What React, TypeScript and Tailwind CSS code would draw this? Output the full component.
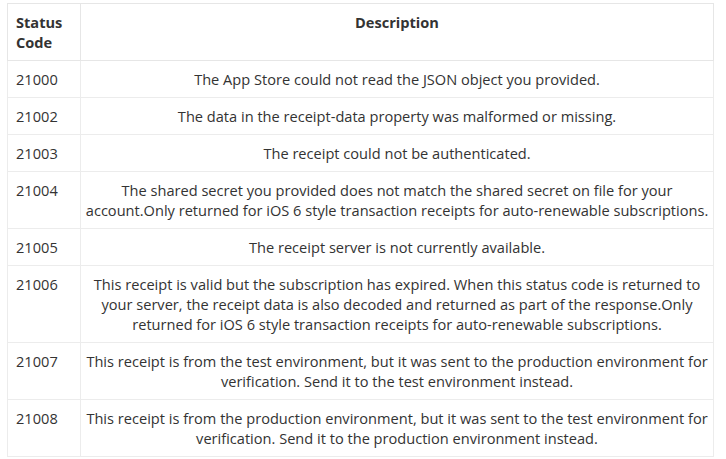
const rows: { code: string; lines: string[] }[] = [
  { code: '21000', lines: ['The App Store could not read the JSON object you provided.'] },
  { code: '21002', lines: ['The data in the receipt-data property was malformed or missing.'] },
  { code: '21003', lines: ['The receipt could not be authenticated.'] },
  {
    code: '21004',
    lines: [
      'The shared secret you provided does not match the shared secret on file for your',
      'account.Only returned for iOS 6 style transaction receipts for auto-renewable subscriptions.',
    ],
  },
  { code: '21005', lines: ['The receipt server is not currently available.'] },
  {
    code: '21006',
    lines: [
      'This receipt is valid but the subscription has expired. When this status code is returned to',
      'your server, the receipt data is also decoded and returned as part of the response.Only',
      'returned for iOS 6 style transaction receipts for auto-renewable subscriptions.',
    ],
  },
  {
    code: '21007',
    lines: [
      'This receipt is from the test environment, but it was sent to the production environment for',
      'verification. Send it to the test environment instead.',
    ],
  },
  {
    code: '21008',
    lines: [
      'This receipt is from the production environment, but it was sent to the test environment for',
      'verification. Send it to the production environment instead.',
    ],
  },
]

export default function App() {
  return (
    <div
      className="w-[726px] h-[459px] bg-white pt-[3px] pl-[7px] text-[#333] text-[14.6px] leading-[20px]"
      style={{ fontFamily: '"Open Sans", "Noto Sans", sans-serif' }}
    >
      <table className="w-[707px] border-collapse border border-[#e6e6e6]">
        <thead>
          <tr>
            <th className="w-[73px] border border-[#e6e6e6] px-2 py-2 text-left align-top font-bold">
              Status
              <br />
              Code
            </th>
            <th className="border border-[#e6e6e6] px-2 py-2 text-center align-top font-bold">
              Description
            </th>
          </tr>
        </thead>
        <tbody>
          {rows.map(r => (
            <tr key={r.code}>
              <td className="border border-[#ececec] px-2 py-2 align-top">{r.code}</td>
              <td className="border border-[#ececec] px-1 py-2 text-center align-top whitespace-nowrap">
                {r.lines.map((l, i) => (
                  <div key={i}>{l}</div>
                ))}
              </td>
            </tr>
          ))}
        </tbody>
      </table>
    </div>
  )
}
